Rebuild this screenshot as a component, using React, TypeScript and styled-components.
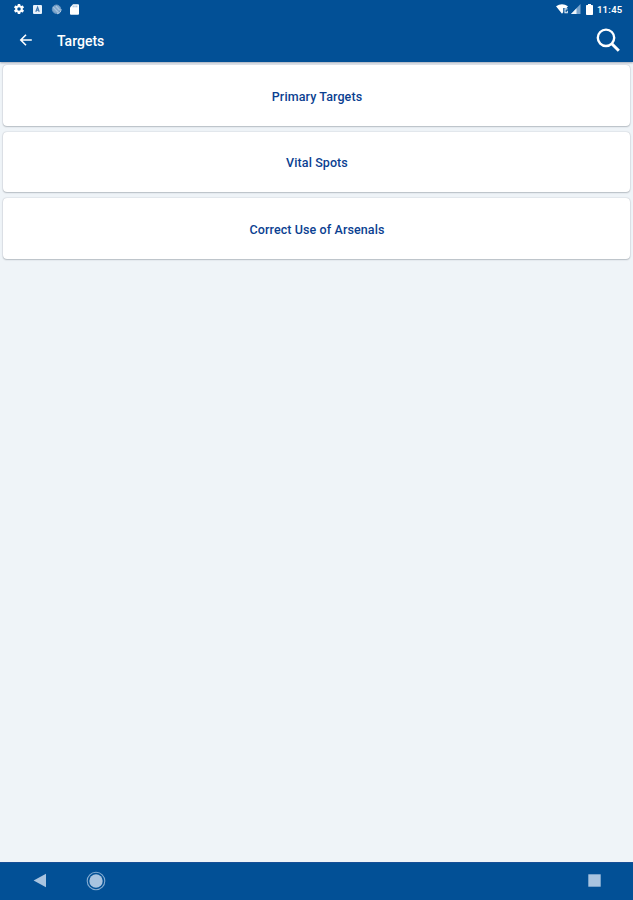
import React from "react";
import styled, { createGlobalStyle } from "styled-components";

const GlobalStyle = createGlobalStyle`
  * { box-sizing: border-box; }
  body { margin: 0; background: #eff4f8; font-family: Roboto, sans-serif; }
`;

const Screen = styled.div`
  display: flex;
  flex-direction: column;
  height: 900px;
  background: #eff4f8;
`;

const Header = styled.header`
  flex: none;
  height: 62px;
  background: #025096;
  color: #fff;
  box-shadow: 0 1px 2px rgba(40, 50, 80, 0.4);
`;

const StatusBar = styled.div`
  display: flex;
  align-items: center;
  justify-content: space-between;
  height: 18px;
  padding: 0 10.5px 0 13px;
`;

const StatusGroup = styled.div<{ $gap: number }>`
  display: flex;
  align-items: center;
  gap: ${(p) => p.$gap}px;
`;

const Clock = styled.span`
  margin-left: 1.5px;
  padding-top: 1px;
  font-size: 9.5px;
  font-weight: 600;
  line-height: 18px;
  letter-spacing: 0.25px;
`;

const Toolbar = styled.div`
  display: flex;
  align-items: center;
  height: 44px;
  padding: 0 12px 0 18px;
`;

const IconButton = styled.button`
  display: flex;
  padding: 0;
  border: 0;
  background: none;
  color: inherit;
`;

const Title = styled.h1`
  flex: 1;
  margin: 2px 0 0 23px;
  font-size: 14px;
  line-height: 18px;
  font-weight: 500;
`;

const List = styled.main`
  flex: 1;
  display: flex;
  flex-direction: column;
  gap: 5.7px;
  padding: 3.2px 3px 0;
`;

const Card = styled.button`
  height: 60.8px;
  padding: 2px 0 0 1px;
  border: 0;
  border-radius: 4px;
  background: #fff;
  box-shadow: 0 0 1.5px rgba(0, 20, 30, 0.26), 0 1px 1.5px rgba(0, 20, 30, 0.2);
  color: #0b3f91;
  font: 500 12.5px/18px Roboto, sans-serif;
  letter-spacing: 0.1px;
`;

const NavBar = styled.nav`
  display: flex;
  align-items: center;
  flex: none;
  height: 38px;
  padding: 0 32px 2px 33px;
  background: #025096;
  color: #a9c4e0;
  border-top: 1px solid #174f97;
`;

const NavButton = styled(IconButton)<{ $before?: string }>`
  margin-left: ${(p) => p.$before ?? "0"};
`;

const GearIcon = () => (
  <svg width="12" height="12" viewBox="0 0 24 24" fill="currentColor">
    <path fillRule="evenodd" d="M19.4 13a7 7 0 0 0 0-2l2.2-1.7a.5.5 0 0 0 .1-.6l-2-3.5a.5.5 0 0 0-.6-.2l-2.5 1a8 8 0 0 0-1.7-1l-.4-2.6A.5.5 0 0 0 14 2h-4a.5.5 0 0 0-.5.4L9.1 5a8 8 0 0 0-1.7 1l-2.5-1a.5.5 0 0 0-.6.2l-2 3.5a.5.5 0 0 0 .1.6L4.6 11a7 7 0 0 0 0 2l-2.2 1.7a.5.5 0 0 0-.1.6l2 3.5c.1.2.4.3.6.2l2.500-1a8 8 0 0 0 1.700 1l.4 2.600c0 .2.2.4.5.4h4c.3 0 .5-.2.5-.4l.4-2.600a8 8 0 0 0 1.700-1l2.500 1c.2.1.5 0 .6-.2l2-3.500a.5.5 0 0 0-.1-.6zM12 15.500a3.500 3.500 0 1 1 0-7 3.500 3.500 0 0 1 0 7z" />
  </svg>
);

const KeyboardIcon = () => (
  <svg width="9" height="9" viewBox="0 0 9 9">
    <rect width="9" height="9" rx="1" fill="#e8f1fa" />
    <path d="M2.8 6.8 4.6 2.2 6.2 6.8M3.4 5.2h2.4" fill="none" stroke="#3c74ad" strokeWidth="1.1" />
  </svg>
);

const SyncIcon = () => (
  <svg width="11" height="11" viewBox="0 0 11 11">
    <circle cx="5.5" cy="5.2" r="4.2" fill="#7fa6cc" stroke="#6b97c2" />
    <path d="M2.2 3.2 7.6 8.8M5 2l3.6 4" stroke="#a9c4de" strokeWidth="1.2" />
    <path d="M6 9.8A4.6 4.6 0 0 0 10 5" fill="none" stroke="#b4cce3" strokeWidth="1" />
  </svg>
);

const SdCardIcon = () => (
  <svg width="9" height="11" viewBox="0 0 9 11">
    <path d="M3 0.2h5q1 0 1 1v8.6q0 1-1 1H1q-1 0-1-1V3.4z" fill="currentColor" />
    <path d="M3.2 1.5v1.8M5 1.5v1.8M6.8 1.5v1.8" stroke="#6f9bc6" strokeWidth=".7" />
  </svg>
);

const WifiIcon = () => (
  <svg width="13" height="10" viewBox="0 0 13 10">
    <path d="M0 2.3Q6-1.7 12 2.3L10.6 4H7.2v4.3L6 9.8z" fill="currentColor" />
    <path d="M11.500 4.900H9v3.800h2.300V6.800" fill="none" stroke="#e4eef7" strokeWidth="1.100" />
  </svg>
);

const SignalIcon = () => (
  <svg width="10" height="10" viewBox="0 0 10 10">
    <path d="M9.5 0v10H0z" fill="#7ba5ce" />
    <path d="M5.5 4.2V10H0z" fill="#edf5fb" />
  </svg>
);

const BatteryIcon = styled(({ className }: { className?: string }) => (
  <svg className={className} width="7" height="11" viewBox="0 0 7 11">
    <path d="M2 0h3v1h1.2q.8 0 .8.8v8.4q0 .8-.8.8H.8q-.8 0-.8-.8V1.8q0-.8.8-.8H2z" fill="currentColor" />
  </svg>
))`
  margin-left: 3px;
`;

const BackArrow = () => (
  <svg width="16" height="16" viewBox="0 0 16 16" fill="none" stroke="currentColor" strokeWidth="1.6">
    <path d="M13.8 8H3M8 2.8 2.8 8 8 13.2" />
  </svg>
);

const SearchIcon = () => (
  <svg width="26" height="26" viewBox="0 0 26 26" fill="none" stroke="currentColor">
    <circle cx="11" cy="10.8" r="8.2" strokeWidth="2.4" />
    <path d="M16.8 16.8 23.800 23.800" strokeWidth="3" />
  </svg>
);

const NavBack = () => (
  <svg width="14" height="15" viewBox="0 0 14 15">
    <path d="M13 .8v13.4L.6 7.5z" fill="currentColor" />
  </svg>
);

const NavHome = () => (
  <svg width="20" height="20" viewBox="0 0 20 20">
    <circle cx="10" cy="10" r="8.8" fill="none" stroke="#83abd2" strokeWidth="1.1" />
    <circle cx="10" cy="10" r="6.7" fill="currentColor" />
  </svg>
);

const NavRecent = () => (
  <svg width="13" height="13" viewBox="0 0 13 13">
    <rect x=".3" y=".3" width="12.4" height="12.4" fill="currentColor" />
  </svg>
);

const topics = ["Primary Targets", "Vital Spots", "Correct Use of Arsenals"];

export default function App() {
  return (
    <Screen>
      <GlobalStyle />
      <Header>
        <StatusBar>
          <StatusGroup $gap={8.3}>
            <GearIcon />
            <KeyboardIcon />
            <SyncIcon />
            <SdCardIcon />
          </StatusGroup>
          <StatusGroup $gap={2}>
            <WifiIcon />
            <SignalIcon />
            <BatteryIcon />
            <Clock>11:45</Clock>
          </StatusGroup>
        </StatusBar>
        <Toolbar>
          <IconButton aria-label="Back"><BackArrow /></IconButton>
          <Title>Targets</Title>
          <IconButton aria-label="Search"><SearchIcon /></IconButton>
        </Toolbar>
      </Header>
      <List>
        {topics.map((topic) => (
          <Card key={topic}>{topic}</Card>
        ))}
      </List>
      <NavBar>
        <NavButton aria-label="Back"><NavBack /></NavButton>
        <NavButton aria-label="Home" $before="39px"><NavHome /></NavButton>
        <NavButton aria-label="Recent apps" $before="auto"><NavRecent /></NavButton>
      </NavBar>
    </Screen>
  );
}
